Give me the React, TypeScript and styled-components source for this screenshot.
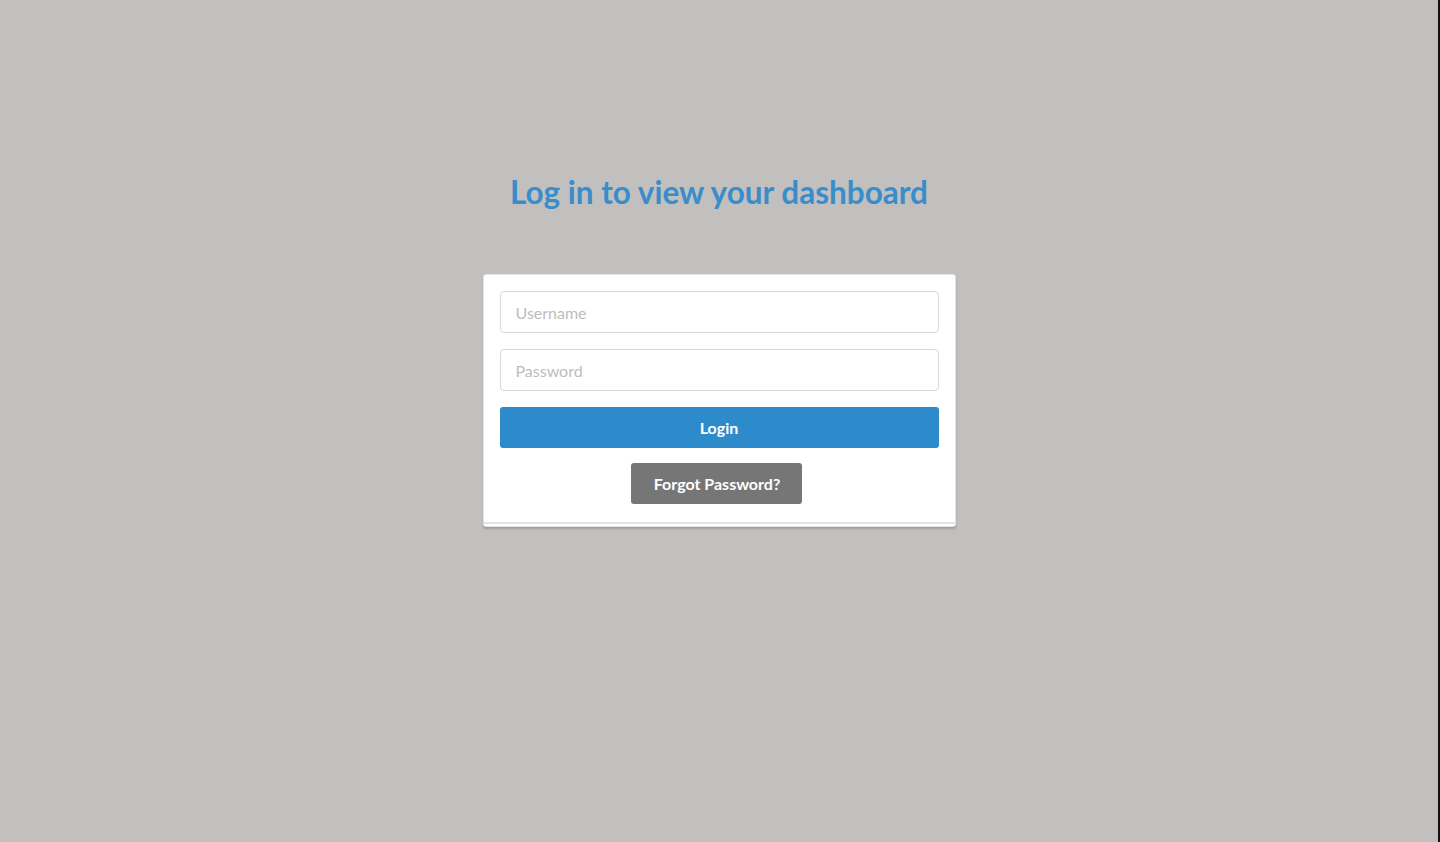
import React from "react";
import styled, { createGlobalStyle } from "styled-components";

const Global = createGlobalStyle`
  html, body { margin: 0; padding: 0; }
  body {
    background: #c1c0be;
    font-family: Lato, "Open Sans", sans-serif;
  }
  * { box-sizing: border-box; }
`;

const Page = styled.div`
  width: 1440px;
  height: 842px;
  display: flex;
  flex-direction: column;
  align-items: center;
  background: #c1c0be;
  border-right: 2px solid #111;
  padding-top: 170px;
`;

const Title = styled.h1`
  margin: 0 0 60px 0;
  font-family: Lato, sans-serif;
  font-weight: 700;
  font-size: 31.5px;
  line-height: 44px;
  color: #3a8dcb;
  text-align: center;
`;

const Card = styled.form`
  width: 473px;
  background: #fff;
  border: 1px solid #e4e4e4;
  border-radius: 3px;
  box-shadow: 0 2px 2px rgba(0, 0, 0, 0.18);
  padding: 16px 16px 0 16px;
  display: flex;
  flex-direction: column;
  gap: 16px;
`;

const Input = styled.input`
  width: 100%;
  height: 42px;
  border: 1px solid #d9d9d9;
  border-radius: 4px;
  padding: 0 15px;
  font-family: Lato, sans-serif;
  font-size: 16px;
  color: #333;
  background: #fff;
  outline: none;
  &::placeholder { color: #bdbdbd; }
`;

const Button = styled.button<{ $variant: "primary" | "muted" }>`
  height: 41px;
  border: none;
  border-radius: 3px;
  font-family: Lato, sans-serif;
  font-weight: 700;
  font-size: 16px;
  color: #fff;
  cursor: pointer;
  background: ${(p) => (p.$variant === "primary" ? "#2d8bcb" : "#767676")};
  width: ${(p) => (p.$variant === "primary" ? "100%" : "auto")};
  padding: ${(p) => (p.$variant === "primary" ? "0" : "0 22px 0 23px")};
  align-self: center;
  margin-left: ${(p) => (p.$variant === "primary" ? "0" : "-5px")};
  margin-top: ${(p) => (p.$variant === "primary" ? "0" : "-1px")};
`;

const Footer = styled.div`
  margin-top: 2px;
  margin-left: -16px;
  margin-right: -16px;
  height: 4px;
  border-top: 2px solid #e2e2e2;
`;

export default function App() {
  return (
    <>
      <Global />
      <Page>
        <Title>Log in to view your dashboard</Title>
        <Card onSubmit={(e) => e.preventDefault()}>
          <Input type="text" placeholder="Username" />
          <Input type="password" placeholder="Password" />
          <Button $variant="primary" type="submit">Login</Button>
          <Button $variant="muted" type="button">Forgot Password?</Button>
          <Footer />
        </Card>
      </Page>
    </>
  );
}
